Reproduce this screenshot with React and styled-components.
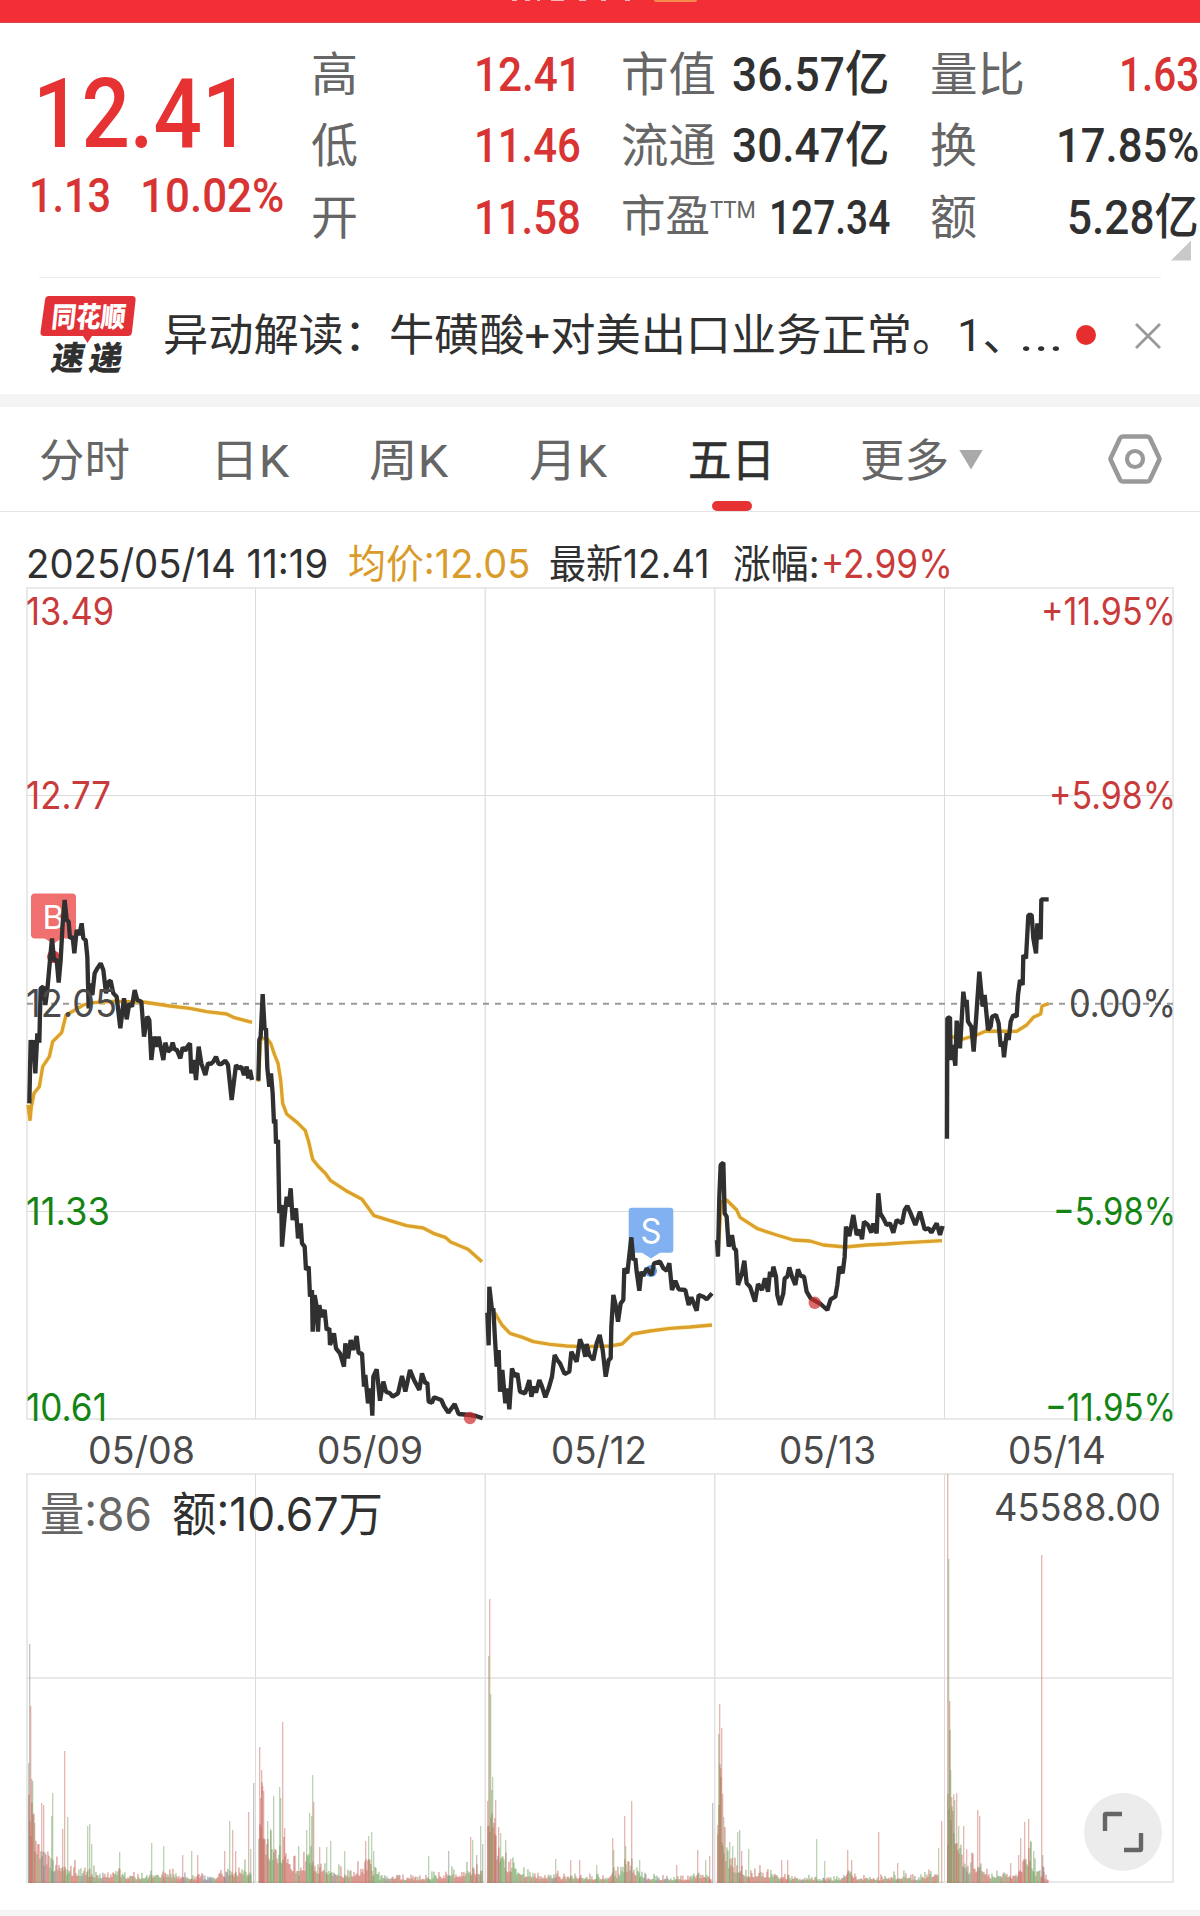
import React, { useLayoutEffect, useRef, useState } from 'react';
import styled, { createGlobalStyle } from 'styled-components';

const GlobalStyle = createGlobalStyle`
  html, body { margin: 0; padding: 0; background: #fff; }
  body { width: 1200px; height: 1916px; overflow: hidden; }
  * { box-sizing: border-box; }
`;

const NUM = "Roboto, 'Noto Sans CJK SC', sans-serif";
const TXT = "Inter, 'Noto Sans CJK SC', sans-serif";
const RED = '#d83434';
const INK = '#303030';
const GREY = '#666';

/* ---------- fixed-width text ---------- */
const FitBox = styled.span`
  display: block;
  flex: none;
  width: ${(p) => p.$w}px;
  height: ${(p) => p.$size * 1.2}px;
  margin-left: ${(p) => p.$ml || 0}px;
  margin-top: ${(p) => p.$mt || 0}px;
  font-family: ${(p) => p.$family || NUM};
  font-size: ${(p) => p.$size}px;
  font-weight: ${(p) => p.$weight || 400};
  -webkit-text-stroke: ${(p) => p.$stroke || 0}px;
  line-height: 1.2;
  color: ${(p) => p.$color || INK};
  white-space: pre;
`;
const FitInner = styled.span`
  display: inline-block;
  transform-origin: 0 50%;
`;
function Fit({ w, size, weight, stroke, color, family, ml, mt, children }) {
  const ref = useRef(null);
  const [k, setK] = useState(1);
  useLayoutEffect(() => {
    setK(w / ref.current.offsetWidth);
  }, [w, children]);
  return (
    <FitBox $w={w} $size={size} $weight={weight} $stroke={stroke} $color={color} $family={family} $ml={ml} $mt={mt}>
      <FitInner ref={ref} style={{ transform: `scaleX(${k})` }}>{children}</FitInner>
    </FitBox>
  );
}

/* ---------- layout ---------- */
const Page = styled.main`
  width: 1200px;
  height: 1916px;
  display: flex;
  flex-direction: column;
  background: #fff;
  overflow: hidden;
`;
const TopBar = styled.header`
  flex: none;
  height: 23px;
  background: #f22e37;
  border-bottom: 1px solid #d9474c;
  display: flex;
  align-items: flex-start;
  padding-left: 511px;
`;
const Quote = styled.section`
  flex: none;
  height: 254px;
  display: grid;
  grid-template-columns: 311px 311px 309px 269px;
`;
const PriceBlock = styled.div`
  padding-top: 33px;
`;
const ChangeRow = styled.div`
  display: flex;
  margin-top: -5px;
`;
const StatColumn = styled.div`
  padding-top: 16px;
`;
const Stat = styled.div`
  height: 71.5px;
  display: flex;
  align-items: center;
  justify-content: ${(p) => (p.$end ? 'space-between' : 'flex-start')};
  padding-right: ${(p) => (p.$end ? 1 : 0)}px;
`;
const Corner = styled.i`
  display: block;
  width: 20px;
  height: 20px;
  margin: -13px 0 0 240px;
  background: #c9c9c9;
  clip-path: polygon(100% 0, 100% 100%, 0 100%);
`;
const Rule = styled.div`
  flex: none;
  height: 1px;
  margin: 0 39px;
  background: #ebebeb;
`;
const News = styled.section`
  flex: none;
  height: 116px;
  display: flex;
  align-items: center;
  padding: 0 38px 0 40px;
`;
const Brand = styled.svg`
  flex: none;
  width: 97px;
  height: 80px;
  margin-top: -3px;
  overflow: visible;
`;
const Dot = styled.i`
  flex: none;
  width: 20px;
  height: 20px;
  border-radius: 50%;
  margin-left: 12px;
  margin-top: -2px;
  background: #e62e2e;
`;
const CloseIcon = styled.svg`
  flex: none;
  width: 28px;
  height: 28px;
  margin-left: auto;
  margin-top: 0;
`;
const Band = styled.div`
  flex: none;
  height: ${(p) => p.$h}px;
  background: #f4f4f4;
`;
const Tabs = styled.nav`
  flex: none;
  height: 105px;
  display: flex;
  border-bottom: 1px solid #e4e4e4;
`;
const Tab = styled.div`
  flex: none;
  width: ${(p) => p.$w}px;
  padding-top: 28px;
  display: flex;
  flex-direction: column;
  align-items: flex-start;
`;
const TabRow = styled.div`
  display: flex;
  align-items: center;
`;
const Indicator = styled.i`
  width: 40px;
  height: 11px;
  margin: 12px 0 0 24px;
  border-radius: 6px;
  background: #e63232;
`;
const Caret = styled.i`
  width: 24px;
  height: 20px;
  margin-left: 10px;
  margin-top: -5px;
  background: #a9a9a9;
  clip-path: polygon(0 0, 100% 0, 50% 100%);
`;
const GearIcon = styled.svg`
  flex: none;
  width: 54px;
  height: 52px;
  margin-top: 26px;
`;
const Info = styled.div`
  flex: none;
  height: 74px;
  display: flex;
  padding: 28px 0 0 26px;
`;
const Charts = styled.svg`
  flex: none;
  display: block;
  width: 1200px;
  height: 1324px;
`;

/* ---------- price data: origin plus trace, three units per pixel ---------- */
const SESSIONS = [
  {
    x: 0, y: 860,
    price: '88,730 92,540 97,600 100,540 106,640 112,520 118,548 120,460 122,385 130,380 136,435 142,390 150,300 156,235 162,300 170,300 176,368 182,300 188,190 194,120 200,180 206,185 210,235 218,230 223,280 230,210 238,225 245,190 250,235 257,240 262,290 266,445 270,370 277,405 284,340 292,325 302,310 310,330 318,400 326,365 332,362 340,400 350,410 361,505 372,415 380,478 388,430 396,440 404,390 412,420 424,425 432,530 442,470 448,480 454,600 462,530 470,560 476,530 484,570 490,600 496,548 504,575 512,568 518,548 524,570 530,568 541,595 548,562 556,572 562,560 570,550 574,640 582,600 588,660 596,560 604,610 616,645 624,610 632,612 640,605 648,590 656,612 664,612 676,602 684,615 695,720 708,615 716,625 724,620 732,645 740,620 745,655 750,630 756,660',
    avg: '84,735 90,782 94,740 102,700 118,680 128,620 148,590 158,545 185,518 198,465 225,450 250,435 280,428 340,424 430,426 470,432 510,438 570,445 620,455 680,462 700,472 756,487',
  },
  {
    x: 240, y: 960,
    price: '55,362 58,240 62,230 68,102 74,210 78,205 82,325 88,380 93,340 98,400 102,490 106,478 108,550 114,540 118,760 124,735 126,860 132,790 140,710 146,740 152,685 158,780 168,745 174,835 182,790 186,850 194,860 198,930 206,920 210,1010 216,990 218,1115 224,1005 230,1040 234,1115 238,1035 244,1070 254,1050 260,1110 268,1105 270,1155 282,1120 288,1165 300,1180 312,1220 316,1150 324,1195 332,1140 340,1170 350,1128 356,1180 366,1180 372,1280 376,1245 384,1330 392,1285 397,1367 400,1250 410,1228 420,1322 430,1265 438,1295 450,1300 458,1310 474,1300 486,1248 496,1295 510,1230 522,1260 538,1290 546,1240 556,1270 562,1268 566,1325 576,1328 582,1312 604,1320 612,1338 625,1358 644,1332 656,1362 690,1365 708,1368 728,1375',
    avg: '55,365 62,240 70,235 80,235 92,250 104,285 114,310 122,360 128,430 140,462 172,488 196,512 206,545 218,598 234,618 256,640 272,662 318,692 366,718 402,767 450,782 500,797 550,804 580,820 616,832 632,846 684,868 726,905',
  },
  {
    x: 470, y: 1200,
    price: '52,338 56,436 58,260 66,330 70,325 74,400 80,500 86,450 90,575 97,510 106,610 112,565 118,628 126,505 134,530 142,520 150,575 165,580 172,560 178,540 184,590 192,560 198,578 208,540 216,560 226,592 236,565 246,530 254,465 262,480 270,490 284,522 298,515 304,455 320,485 330,418 340,445 346,470 350,432 358,465 370,480 380,430 389,405 398,450 407,530 416,480 422,475 424,380 430,285 438,320 444,365 452,310 460,300 463,205 472,220 484,112 490,180 496,175 500,215 508,272 514,215 520,228 530,205 545,225 552,190 570,185 580,205 590,212 598,190 606,270 616,242 626,268 646,270 656,315 664,292 680,332 686,285 700,290 710,298 726,280',
    avg: '74,338 96,375 120,400 160,413 190,425 240,433 290,438 340,440 420,438 456,432 488,402 540,393 600,385 660,381 726,375',
  },
  {
    x: 700, y: 1130,
    price: '51,330 54,380 58,200 62,105 70,98 74,250 80,260 86,350 96,315 102,355 108,360 114,465 126,430 133,392 140,460 150,470 165,515 174,462 186,480 195,445 204,485 210,425 216,440 220,410 228,440 232,495 240,525 250,490 254,445 262,440 268,412 276,440 286,465 294,418 302,438 312,440 320,485 332,505 344,512 362,522 382,540 392,508 406,500 412,465 418,410 428,430 434,380 438,290 448,318 460,255 470,315 480,300 486,328 492,275 504,285 514,308 520,280 530,310 535,190 541,250 550,265 560,285 570,280 580,308 590,270 606,280 614,240 622,228 632,250 646,285 660,245 674,298 686,295 694,308 710,280 720,315 728,288',
    avg: '54,370 64,215 80,210 110,240 120,262 172,296 230,315 280,330 330,333 370,345 436,351 500,345 560,342 620,338 726,332',
  },
  {
    x: 920, y: 860,
    price: '81,836 82,475 90,472 92,600 98,555 106,617 110,482 120,565 130,395 136,440 140,420 144,485 154,500 161,575 168,480 178,335 188,440 194,405 204,510 212,500 216,470 228,465 236,490 242,560 248,545 252,592 260,520 266,540 272,485 280,465 290,470 294,405 300,360 308,375 310,285 318,295 325,165 335,165 340,235 348,280 352,190 362,238 364,118 386,118',
    avg: '86,600 92,530 130,537 170,525 198,513 290,514 320,495 340,472 362,462 366,438 386,431',
  },
];

/* ---------- volume data: running level and single peaks ---------- */
const VOLUME = [
  {
    base: [[28, 110], [33, 75], [40, 40], [50, 28], [58, 25], [66, 20], [75, 16], [90, 14], [105, 10], [118, 15], [130, 8], [160, 12], [190, 9], [215, 8], [230, 14], [243, 18], [251, 14]],
    peaks: 'g28.5,120 k29.5,239 r30.7,177 r31.7,104 g32.5,102 r34,60 r41,80 r43,78 g51,67 g52.7,90 r64,132 r62,54 g67,66 g87.5,57 g89.5,59 g91.5,39 g119.5,31 g151,40 g163.5,37 r182,28 g191,32 r197,28 r224,32 g229.5,62 r232.5,53 r235,32 r248.5,71 g250,34 k253.3,100',
  },
  {
    base: [[258, 110], [263, 90], [266, 55], [275, 45], [285, 50], [290, 25], [300, 16], [308, 45], [316, 20], [330, 18], [345, 12], [368, 22], [378, 8], [420, 6], [440, 10], [460, 14], [478, 20], [482, 15]],
    peaks: 'r259,136 r260,85 r261.7,113 r262.7,97 r263.5,92 g267,62 g273,87 g270.5,54 g279,96 g280.5,85 r282.7,161 r284,55 g298.5,37 g306,53 g309,70 g311,67 g312.5,108 r313.5,81 r319,36 g326,36 g330.5,42 g344.5,32 r365,42 g368,47 g371.5,51 g373,32 g428.5,27 k448,32 r470,46 g472,43 k476.5,28 g480,57 k482.5,39',
  },
  {
    base: [[487, 100], [492, 70], [500, 40], [508, 22], [520, 14], [540, 10], [600, 8], [608, 8], [612, 25], [616, 10], [622, 25], [630, 28], [636, 15], [645, 7], [685, 6], [700, 12], [708, 12], [711, 4]],
    peaks: 'r487.5,82 g488.7,227 r489.4,284 g490.5,189 g491.5,93 g492.5,106 r494,65 r495.2,83 r498,56 g500,50 g505.5,43 r510,24 g555,24 r570,23 r579.5,23 g596,18 r612,45 g613.5,33 r624.5,67 g625.5,37 r631,82 g639.5,23 r676,18 r697.5,33 g705,23 r709,27 k712.5,80',
  },
  {
    base: [[717, 120], [722, 70], [730, 25], [740, 25], [746, 12], [760, 15], [780, 9], [800, 6], [830, 5], [845, 10], [848, 16], [855, 8], [880, 6], [906, 10], [915, 6], [930, 14], [938, 16]],
    peaks: 'r717.5,58 g718.5,149 r719.3,179 r720,115 r721,155 r722,89 g723.5,66 g729,41 g732.5,37 g737.5,51 k739.5,53 r741.5,32 g748,34 r781,23 r787.5,23 g816.5,44 g824,22 r847,33 r851,23 r878.5,51 r897,20 g938.5,35 r941.8,62',
  },
  {
    base: [[947, 140], [952, 85], [957, 55], [963, 38], [968, 18], [976, 28], [982, 20], [990, 10], [1000, 13], [1012, 10], [1020, 18], [1026, 35], [1032, 30], [1036, 12], [1041, 14], [1044, 10], [1048, 4]],
    peaks: 'r947,409 r947.7,38 g948.7,324 r949.5,182 g950.5,113 r951.7,86 r953.5,89 g954.5,83 r956.5,90 g958,57 r963,57 r966.5,34 r977.5,73 r979.5,67 r1010.5,20 r1018,28 r1020,45 r1024.5,61 r1028.5,64 g1030,42 g1033,32 r1041.5,328 k1042.5,28 k1043.5,16',
  },
];
const BAR = { r: '#c9645a', g: '#6f9f5c', k: '#7d7d82' };
const FLOOR = 1883;

function bars() {
  const out = [];
  let seed = 71;
  const rnd = () => {
    seed = (seed * 16807) % 2147483647;
    return seed / 2147483647;
  };
  VOLUME.forEach(({ base, peaks }) => {
    let tone = 'r';
    for (let i = 0; i < base.length - 1; i += 1) {
      const [x0, h0] = base[i];
      const [x1, h1] = base[i + 1];
      for (let x = x0; x < x1; x += 1) {
        const level = h0 + ((h1 - h0) * (x - x0)) / (x1 - x0);
        const q = rnd();
        if (q < 0.55) tone = rnd() < 0.5 ? 'r' : rnd() < 0.85 ? 'g' : 'k';
        const h = Math.max(2, level * (0.4 + 1.1 * rnd() * rnd()));
        out.push([tone, x, h, 1.8]);
      }
    }
    peaks.split(' ').forEach((s) => {
      const [x, h] = s.slice(1).split(',').map(Number);
      out.push([s[0], Math.floor(x), h, 1.35]);
    });
  });
  return out;
}
const BARS = bars();

function Label({ x, y, w, size = 38, fill = '#4a4a4a', children }) {
  return (
    <text x={x} y={y} textLength={w} lengthAdjust="spacingAndGlyphs" fontSize={size} fill={fill} fontFamily={TXT}>
      {children}
    </text>
  );
}

const UP = '#c93a3a';
const DOWN = '#148514';

function ChartArea() {
  return (
    <Charts viewBox="0 586 1200 1324">
      <g fill="none" stroke="#e9e9e9" strokeWidth="2">
        <path d="M27 588V1419M1173 588V1419M26 588H1174M26 1419H1174M26 1474H1174M27 1474V1883M1173 1474V1883M26 1678H1174M26 1882H1174" />
        <path strokeWidth="1" stroke="#dcdcdc" d="M27 795.5H1173M27 1211.5H1173M255.5 588V1419M944.5 588V1419M255.5 1474V1882M944.5 1474V1882" />
        <path strokeWidth="1.5" stroke="#e2e2e2" d="M485.3 588V1419M714.7 588V1419M485.3 1474V1882M714.7 1474V1882" />
      </g>
      <path d="M27 1003.7H1173" stroke="#999" strokeWidth="2" strokeDasharray="6 6" />

      <g fill="#f07070">
        <rect x="31" y="893.5" width="45" height="45" rx="4" />
        <path d="M44 938H62L53.3 944Z" />
      </g>
      <Label x="42.5" y="929" w="21.5" size={33} fill="#fff">B</Label>
      <g fill="#81b1f0">
        <rect x="628.7" y="1207.7" width="44.6" height="45" rx="3" />
        <path d="M641 1252H661L651 1258.5Z" />
      </g>
      <Label x="640.5" y="1243" w="21" size={34} fill="#fff">S</Label>
      <circle cx="53.3" cy="956.7" r="6.3" fill="#d93f3f" />
      <circle cx="651" cy="1271" r="6" fill="#5d9bea" />

      {SESSIONS.map((s) => (
        <g key={s.x} transform={`translate(${s.x} ${s.y}) scale(0.33333)`} fill="none" strokeLinejoin="bevel">
          <polyline points={s.avg} stroke="#fff3b8" strokeWidth="15" opacity=".6" />
          <polyline points={s.avg} stroke="#dca02c" strokeWidth="10" />
          <polyline points={s.price} stroke="#303030" strokeWidth="13" />
        </g>
      ))}
      <circle cx="470" cy="1418" r="6.2" fill="#d02c2c" opacity=".7" />
      <circle cx="814.8" cy="1302.8" r="6.2" fill="#d02c2c" opacity=".7" />

      <Label x="26" y="1017" w="91">12.05</Label>
      <Label x="1069" y="1017" w="107">0.00%</Label>

      <Label x="26" y="625" w="88" fill={UP}>13.49</Label>
      <Label x="26" y="809" w="85" fill={UP}>12.77</Label>
      <Label x="26" y="1225" w="84" fill={DOWN}>11.33</Label>
      <Label x="26" y="1421" w="81" fill={DOWN}>10.61</Label>
      <Label x="1041" y="625" w="135" fill={UP}>+11.95%</Label>
      <Label x="1049" y="809" w="127" fill={UP}>+5.98%</Label>
      <Label x="1053" y="1225" w="123" fill={DOWN}>−5.98%</Label>
      <Label x="1045" y="1421" w="131" fill={DOWN}>−11.95%</Label>

      <Label x="88" y="1464" w="107">05/08</Label>
      <Label x="317" y="1464" w="106">05/09</Label>
      <Label x="551" y="1464" w="96">05/12</Label>
      <Label x="779" y="1464" w="97">05/13</Label>
      <Label x="1008" y="1464" w="98">05/14</Label>

      <g>
        {BARS.map(([c, x, h, bw], i) => (
          <rect key={i} x={x} y={FLOOR - h} width={bw} height={h} fill={BAR[c]} opacity=".46" />
        ))}
      </g>

      <Label x="40" y="1531" w="112" size={47} fill={GREY}>量:86</Label>
      <Label x="172" y="1531" w="211" size={47} fill={INK}>额:10.67万</Label>
      <Label x="994" y="1521" w="167">45588.00</Label>

      <circle cx="1123" cy="1832" r="39" fill="#ececec" />
      <path d="M1105 1831V1815Q1105 1814 1106 1814H1122M1124 1850H1140Q1141 1850 1141 1849V1833" fill="none" stroke="#666" strokeWidth="4.4" />
    </Charts>
  );
}

const LABEL = { size: 47, color: GREY };
const VALUE = { size: 48.5, weight: 500 };

export default function App() {
  return (
    <Page>
      <GlobalStyle />
      <TopBar>
        <svg width="190" height="3" viewBox="0 0 190 3">
          <path d="M1 .4H6M14 .4H19M26 .4H29M40 .4H53M68 .4H75M90 .4H95M114 .4H119" stroke="#f9b5b8" strokeWidth="1.200" />
          <rect x="143" y="-4" width="43" height="6" rx="2" fill="#f68a4b" />
        </svg>
      </TopBar>

      <Quote>
        <PriceBlock>
          <Fit w={217} size={97} weight={500} color="#e63232" ml={33}>12.41</Fit>
          <ChangeRow>
            <Fit w={82} size={48.5} weight={500} color={RED} ml={29}>1.13</Fit>
            <Fit w={144} size={48.5} weight={500} color={RED} ml={29}>10.02%</Fit>
          </ChangeRow>
        </PriceBlock>
        <StatColumn>
          <Stat><Fit w={47} {...LABEL}>高</Fit><Fit w={108} {...VALUE} color={RED} ml={116}>12.41</Fit></Stat>
          <Stat><Fit w={47} {...LABEL}>低</Fit><Fit w={107} {...VALUE} color={RED} ml={116}>11.46</Fit></Stat>
          <Stat><Fit w={47} {...LABEL}>开</Fit><Fit w={107} {...VALUE} color={RED} ml={116}>11.58</Fit></Stat>
        </StatColumn>
        <StatColumn>
          <Stat><Fit w={95} {...LABEL} ml={-1}>市值</Fit><Fit w={157} {...VALUE} ml={16}>36.57亿</Fit></Stat>
          <Stat><Fit w={95} {...LABEL} ml={-1}>流通</Fit><Fit w={157} {...VALUE} ml={16}>30.47亿</Fit></Stat>
          <Stat>
            <Fit w={89} size={44} color={GREY} ml={-1}>市盈</Fit>
            <Fit w={46} size={24} color={GREY} mt={-14}>TTM</Fit>
            <Fit w={121} {...VALUE} ml={13}>127.34</Fit>
          </Stat>
        </StatColumn>
        <StatColumn>
          <Stat $end><Fit w={95} {...LABEL} ml={-1}>量比</Fit><Fit w={80} {...VALUE} color={RED}>1.63</Fit></Stat>
          <Stat $end><Fit w={47} {...LABEL} ml={-1}>换</Fit><Fit w={143} {...VALUE}>17.85%</Fit></Stat>
          <Stat $end><Fit w={47} {...LABEL} ml={-1}>额</Fit><Fit w={132} {...VALUE}>5.28亿</Fit></Stat>
          <Corner />
        </StatColumn>
      </Quote>
      <Rule />

      <News>
        <Brand viewBox="0 0 97 80">
          <path d="M9 1H92Q96 1 95.6 5L92 37Q91.500 41 88 41H52L47.500 48L43 41H4Q0 41 .5 37L5 5Q5.500 1 9 1Z" fill="#e33237" />
          <text x="14" y="32" transform="skewX(-6)" textLength="74" lengthAdjust="spacingAndGlyphs" fontSize="28" fontWeight="900" fill="#fff" fontFamily="Noto Sans CJK SC, sans-serif">同花顺</text>
          <text x="23" y="75" transform="skewX(-10)" textLength="71" lengthAdjust="spacing" fontSize="33" fontWeight="900" fill="#303030" fontFamily="Noto Sans CJK SC, sans-serif">速递</text>
        </Brand>
        <Fit w={865} size={44} ml={26} mt={1}>异动解读：牛磺酸+对美出口业务正常。1、</Fit>
        <Fit w={45} size={44} ml={-9} mt={1}>...</Fit>
        <Dot />
        <CloseIcon viewBox="0 0 28 28"><path d="M2 2L26 26M26 2L2 26" stroke="#999" strokeWidth="2.8" /></CloseIcon>
      </News>
      <Band $h={13} />

      <Tabs>
        <Tab $w={174}><Fit w={91} size={45} color={GREY} ml={39}>分时</Fit></Tab>
        <Tab $w={195}><Fit w={79} size={45} color={GREY} ml={36}>日K</Fit></Tab>
        <Tab $w={160}><Fit w={79} size={45} color={GREY}>周K</Fit></Tab>
        <Tab $w={159}><Fit w={78} size={45} color={GREY}>月K</Fit></Tab>
        <Tab $w={172}><Fit w={87} size={45} stroke={0.6} color={INK}>五日</Fit><Indicator /></Tab>
        <Tab $w={248}><TabRow><Fit w={89} size={45} color={GREY}>更多</Fit><Caret /></TabRow></Tab>
        <GearIcon viewBox="0 0 54 52">
          <path d="M15 3.500H39Q41 3.500 42 5.200L51 24.500Q51.800 26 51 27.500L42 46.800Q41 48.500 39 48.500H15Q13 48.500 12 46.800L3 27.500Q2.200 26 3 24.500L12 5.200Q13 3.500 15 3.500Z" fill="none" stroke="#999" strokeWidth="4.600" />
          <circle cx="27" cy="26" r="8" fill="none" stroke="#999" strokeWidth="4.200" />
        </GearIcon>
      </Tabs>

      <Info>
        <Fit w={302} size={40} family={TXT}>2025/05/14 11:19</Fit>
        <Fit w={182} size={40} family={TXT} color="#d99c2a" ml={20}>均价:12.05</Fit>
        <Fit w={161} size={40} family={TXT} ml={19}>最新12.41</Fit>
        <Fit w={87} size={40} family={TXT} ml={23}>涨幅:</Fit>
        <Fit w={132} size={40} family={TXT} color="#c93a3a" ml={1}>+2.99%</Fit>
      </Info>

      <ChartArea />
      <Band $h={6} />
    </Page>
  );
}
